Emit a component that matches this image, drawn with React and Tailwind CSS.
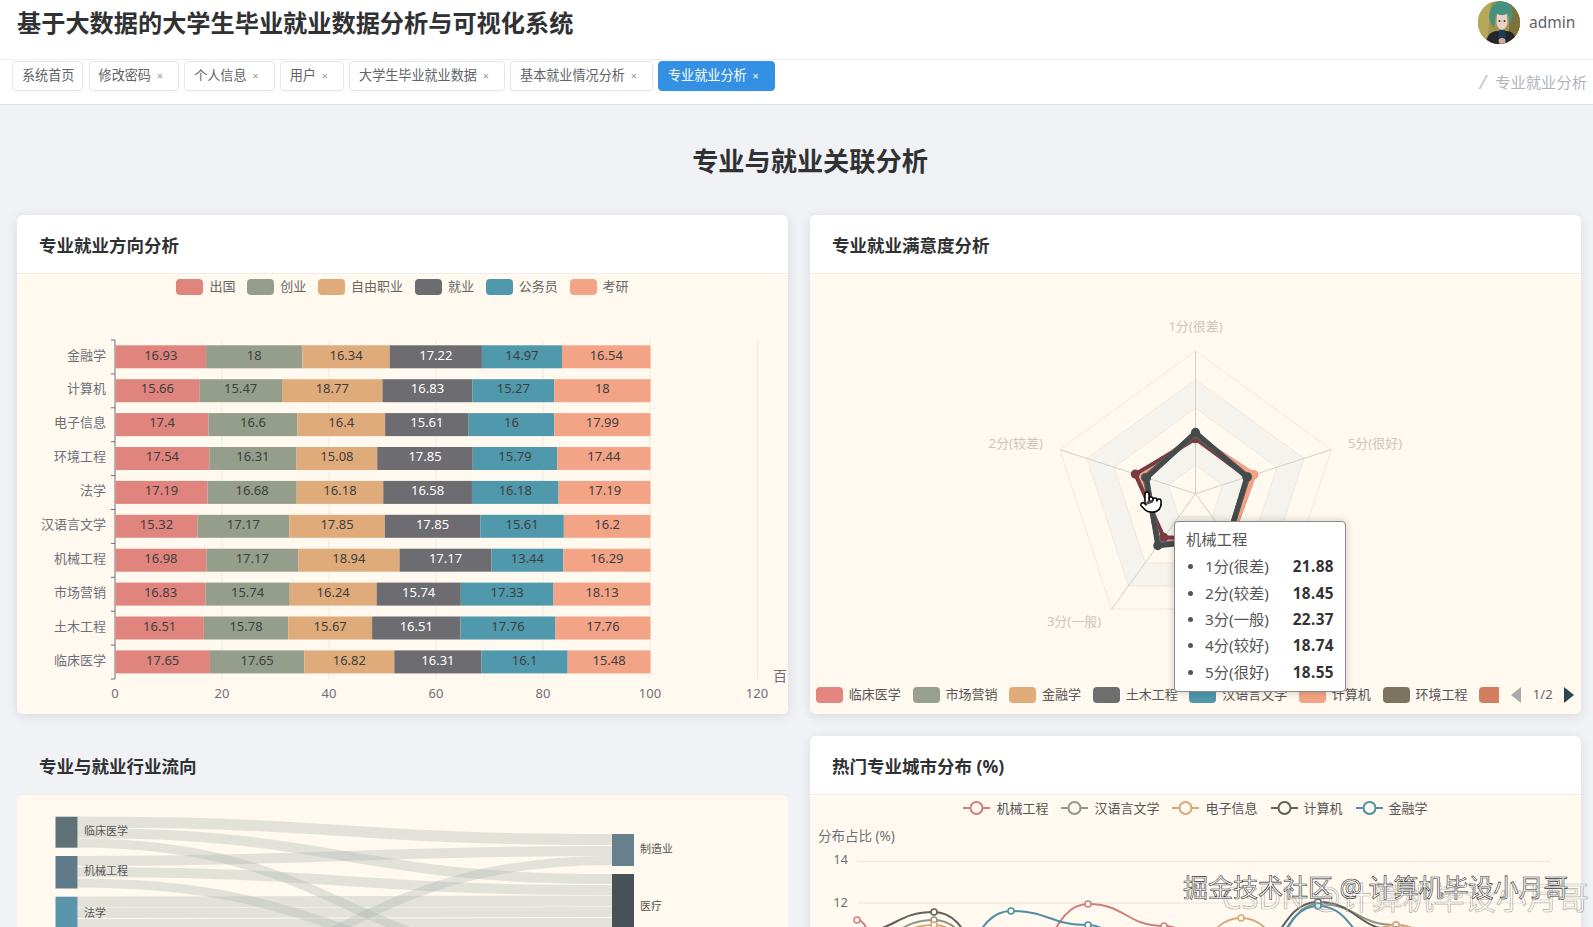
import React from 'react';
import { ChevronDown, Pointer } from 'lucide-react';

const tabs = [
  { name: '系统首页', fixed: true },
  { name: '修改密码' },
  { name: '个人信息' },
  { name: '用户' },
  { name: '大学生毕业就业数据' },
  { name: '基本就业情况分析' },
  { name: '专业就业分析', active: true },
];

const barColors = ['#e0847e', '#949e8b', '#dfab7a', '#6c6c71', '#5098ac', '#f3a386'];
const barLegend = ['出国', '创业', '自由职业', '就业', '公务员', '考研'];
const barRows = [
  ['金融学', [16.93, 18, 16.34, 17.22, 14.97, 16.54]],
  ['计算机', [15.66, 15.47, 18.77, 16.83, 15.27, 18]],
  ['电子信息', [17.4, 16.6, 16.4, 15.61, 16, 17.99]],
  ['环境工程', [17.54, 16.31, 15.08, 17.85, 15.79, 17.44]],
  ['法学', [17.19, 16.68, 16.18, 16.58, 16.18, 17.19]],
  ['汉语言文学', [15.32, 17.17, 17.85, 17.85, 15.61, 16.2]],
  ['机械工程', [16.98, 17.17, 18.94, 17.17, 13.44, 16.29]],
  ['市场营销', [16.83, 15.74, 16.24, 15.74, 17.33, 18.13]],
  ['土木工程', [16.51, 15.78, 15.67, 16.51, 17.76, 17.76]],
  ['临床医学', [17.65, 17.65, 16.82, 16.31, 16.1, 15.48]],
];

const radarLegend = [
  ['临床医学', '#e3867f'],
  ['市场营销', '#98a18f'],
  ['金融学', '#dfab78'],
  ['土木工程', '#6e6e70'],
  ['汉语言文学', '#4f97ab'],
  ['计算机', '#f4a384'],
  ['环境工程', '#7d7460'],
];

const tooltipRows = [
  ['1分(很差)', '21.88'],
  ['2分(较差)', '18.45'],
  ['3分(一般)', '22.37'],
  ['4分(较好)', '18.74'],
  ['5分(很好)', '18.55'],
];

const lineLegend = [
  ['机械工程', '#cf7f7c'],
  ['汉语言文学', '#8f978a'],
  ['电子信息', '#d6a97c'],
  ['计算机', '#615f5c'],
  ['金融学', '#4f8fa3'],
];

// sankey links: from y, to y, width
const links = [
  [822, 839.5, 11],
  [833, 879, 10],
  [843, 965, 9],
  [861, 851, 10],
  [872, 890, 10],
  [883, 975, 9],
  [902, 901, 11],
  [913, 912, 10],
  [924, 923, 10],
  [990, 860.5, 9],
];

const RCX = 1195.5;
const RCY = 493.7;
const RR = 142.7;

function radarPoint(i, f) {
  const a = (-90 - i * 72) * (Math.PI / 180);
  return [RCX + Math.cos(a) * RR * f, RCY + Math.sin(a) * RR * f];
}

function ring(f) {
  return [0, 1, 2, 3, 4].map((i) => radarPoint(i, f).join(',')).join(' ');
}

const radarSeries = [
  ['#e3867f', [0.4, 0.42, 0.4, 0.41, 0.43], 5],
  ['#f4a384', [0.39, 0.43, 0.39, 0.4, 0.427], 5],
  ['#7a3a42', [0.385, 0.444, 0.378, 0.4, 0.38], 4],
  ['#5f6462', [0.42, 0.37, 0.44, 0.39, 0.385], 5.5],
  ['#454b4b', [0.43, 0.36, 0.45, 0.39, 0.378], 5],
];

function curve(points) {
  let d = `M${points[0][0]} ${points[0][1]}`;
  for (let i = 1; i < points.length; i++) {
    const [x0, y0] = points[i - 1];
    const [x1, y1] = points[i];
    const mx = (x0 + x1) / 2;
    d += ` C${mx} ${y0} ${mx} ${y1} ${x1} ${y1}`;
  }
  return d;
}

const lines = [
  ['#cf7f7c', [[857, 920], [880, 945], [1011, 975], [1088, 904], [1164, 926], [1241, 980]]],
  ['#8f978a', [[857, 945], [934, 920], [1011, 980], [1241, 985], [1318, 904], [1396, 925], [1473, 970]]],
  ['#d6a97c', [[857, 950], [934, 925], [1011, 985], [1164, 975], [1241, 918], [1318, 975], [1396, 925], [1473, 965]]],
  ['#615f5c', [[857, 932], [934, 912], [1011, 978], [1164, 980], [1241, 960], [1318, 902], [1396, 930], [1473, 975]]],
  ['#4f8fa3', [[857, 975], [934, 975], [1011, 911], [1088, 925], [1164, 985], [1241, 975], [1318, 906], [1396, 960]]],
];

function Avatar() {
  return (
    <svg viewBox="0 0 42 43" className="w-[42px] h-[43px] rounded-full shrink-0">
      <rect width="42" height="43" fill="#a3954c" />
      <path d="M0 0h13L9 43H0z" fill="#b7a75a" />
      <path d="M31 0h11v43H31z" fill="#7d7238" />
      <path d="M11 16C12 5 17 0 24 0c7 0 11 5 11 15l-3 9-2-11c-4 2-9 2-12 0l-2 14-3-4z" fill="#46907f" />
      <path d="M19 13c3 1.500 7 1.500 10 0l.5 9c-.5 4-3 6.500-5.500 6.500s-5-2.500-5.500-6.500z" fill="#e6d2c6" />
      <circle cx="21.500" cy="20" r="1" fill="#2a3238" />
      <circle cx="26.500" cy="20" r="1" fill="#2a3238" />
      <path d="M8 43c0-8 5-13 11-13h10c6 0 9 5 9 13z" fill="#23272b" />
      <path d="M21 29h6l1 8h-8z" fill="#1c3a5a" />
      <ellipse cx="24" cy="40" rx="3.500" ry="3" fill="#d3a9a2" />
    </svg>
  );
}

function Card({ title, plainHeader, children }) {
  return (
    <section className={`rounded-md overflow-hidden ${plainHeader ? '' : 'bg-white shadow-[0_2px_12px_rgba(0,0,0,0.1)]'}`}>
      <h2 className="h-[59px] px-[22px] pt-[2px] flex items-center text-[17.5px] font-bold text-[#303133] border-b border-[#f0ede6]">{title}</h2>
      <div className="h-[440px] bg-[#fff9ef] flex flex-col overflow-hidden rounded-t-md">{children}</div>
    </section>
  );
}

function BarChart() {
  return (
    <>
      <div className="flex justify-center gap-[11.8px] pt-[5px] h-[21px] shrink-0 text-[13px] leading-[16px] text-[#666]">
        {barLegend.map((name, i) => (
          <div key={name} className="flex items-center gap-[6px]">
            <span className="w-[27px] h-[16px] rounded-[4px]" style={{ background: barColors[i] }} />
            <span className="mb-[2px]">{name}</span>
          </div>
        ))}
      </div>
      <svg viewBox="17 295 771 419" className="w-[771px] h-[419px] shrink-0">
        {[222, 329, 436, 543, 650, 757.6].map((x) => (
          <line key={x} x1={x} x2={x} y1="340" y2="679" stroke="#eeebe2" />
        ))}
        <line x1="115" x2="115" y1="340" y2="679" stroke="#6e7079" />
        {Array.from({ length: 11 }).map((_, i) => (
          <line key={i} x1="111" x2="115" y1={340 + i * 33.9} y2={340 + i * 33.9} stroke="#6e7079" />
        ))}
        {barRows.map(([name, values], r) => {
          const cy = 355 + r * 33.9;
          const total = values.reduce((a, b) => a + b, 0);
          let x = 115.5;
          return (
            <g key={name}>
              <text x="106" y={cy + 4.5} textAnchor="end" fontSize="13" fill="#6e7079">{name}</text>
              {values.map((v, i) => {
                const w = (v / total) * 535;
                const el = (
                  <g key={i}>
                    <rect x={x} y={cy - 9.7} width={w} height="23" fill={barColors[i]} />
                    <text x={x + w / 2} y={cy + 4.5} textAnchor="middle" fontSize="13" fill={i === 3 ? '#ffffff' : '#3f3f3f'}>{v}</text>
                  </g>
                );
                x += w;
                return el;
              })}
            </g>
          );
        })}
        {[0, 20, 40, 60, 80, 100, 120].map((t, i) => (
          <text key={t} x={115 + i * 107} y="698" textAnchor="middle" fontSize="13" fill="#6e7079">{t}</text>
        ))}
        <text x="773" y="681" fontSize="14" fill="#6e7079">百分比</text>
      </svg>
    </>
  );
}

function RadarChart() {
  return (
    <div className="relative flex flex-col h-full">
      <svg viewBox="810 274 771 406" className="w-[771px] h-[406px] shrink-0">
        <path d={`M${ring(0.8).replace(/ /g, ' L')} Z M${ring(0.6).replace(/ /g, ' L')} Z`} fill="#f5f3ee" fillRule="evenodd" />
        <path d={`M${ring(0.4).replace(/ /g, ' L')} Z M${ring(0.2).replace(/ /g, ' L')} Z`} fill="#f5f3ee" fillRule="evenodd" />
        {[0.2, 0.4, 0.6, 0.8, 1].map((f) => (
          <polygon key={f} points={ring(f)} fill="none" stroke="#ece9e0" />
        ))}
        {[0, 1, 2, 3, 4].map((i) => {
          const [x, y] = radarPoint(i, 1);
          return <line key={i} x1={RCX} y1={RCY} x2={x} y2={y} stroke="#d3cfc5" />;
        })}
        {radarSeries.map(([color, vals, sw], s) => {
          const pts = vals.map((f, i) => radarPoint(i, f));
          return (
            <g key={s}>
              <polygon points={pts.map((p) => p.join(',')).join(' ')} fill="none" stroke={color} strokeWidth={sw} strokeLinejoin="round" />
              {pts.map((p, i) => (
                <circle key={i} cx={p[0]} cy={p[1]} r="4.5" fill={color} />
              ))}
            </g>
          );
        })}
        <text x={RCX} y="331" textAnchor="middle" fontSize="13" fill="#cbc7bd">1分(很差)</text>
        <text x="1015.7" y="448" textAnchor="middle" fontSize="13" fill="#cbc7bd">2分(较差)</text>
        <text x="1375" y="448" textAnchor="middle" fontSize="13" fill="#cbc7bd">5分(很好)</text>
        <text x="1074" y="626" textAnchor="middle" fontSize="13" fill="#cbc7bd">3分(一般)</text>
      </svg>
      <div className="mt-[6px] flex items-center gap-[11.8px] pl-[6px] text-[13px] leading-[16px] text-[#555] whitespace-nowrap">
        {radarLegend.map(([name, color]) => (
          <div key={name} className="flex items-center gap-[5.8px]">
            <span className="w-[27px] h-[16px] rounded-[4px]" style={{ background: color }} />
            <span className="mb-[2px]">{name}</span>
          </div>
        ))}
        <span className="w-[20px] h-[16px] rounded-l-[4px] bg-[#d17f5e]" />
        <svg viewBox="0 0 10 16" className="w-[10px] h-[16px] fill-[#aaaaaa]"><path d="M10 0v16L0 8z" /></svg>
        <span className="mb-[2px] text-[#666]">1/2</span>
        <svg viewBox="0 0 10 16" className="w-[10px] h-[16px] fill-[#2f4554]"><path d="M0 0v16l10-8z" /></svg>
      </div>
      <div className="absolute left-[364px] top-[247px] w-[172px] h-[171px] bg-white border-[1.5px] border-[#8a8a86] rounded-[4px] shadow-[0_0_8px_rgba(0,0,0,0.2)] px-[11px] pt-[5px] text-[15.3px] text-[#555]">
        <div className="h-[26.5px] leading-[24px]">机械工程</div>
        {tooltipRows.map(([label, val]) => (
          <div key={label} className="h-[26.4px] flex items-center">
            <span className="w-[5px] h-[5px] rounded-full bg-[#555] ml-[2px] mr-[12px]" />
            <span>{label}</span>
            <span className="ml-auto font-bold text-[#333] tracking-[0.4px]">{val}</span>
          </div>
        ))}
      </div>
      <Pointer size={24} className="absolute left-[329px] top-[216px] fill-white text-black" strokeWidth={1.5} />
    </div>
  );
}

function SankeyChart() {
  return (
    <svg viewBox="17 795 771 440" className="w-[771px] h-[440px] shrink-0">
      {links.map(([a, b, w], i) => (
        <path key={i} d={`M77.5 ${a} C345 ${a} 345 ${b} 612 ${b}`} fill="none" stroke="#a9b2b0" strokeOpacity="0.33" strokeWidth={w} />
      ))}
      <rect x="55.5" y="816.7" width="22" height="31" fill="#5e7278" />
      <rect x="55.5" y="856" width="22" height="32.5" fill="#5f7a88" />
      <rect x="55.5" y="896.7" width="22" height="60" fill="#5b95ab" />
      <rect x="612" y="834" width="22" height="32" fill="#66808c" />
      <rect x="612" y="874" width="22" height="90" fill="#475158" />
      <text x="84" y="835" fontSize="11" fill="#555">临床医学</text>
      <text x="84" y="875" fontSize="11" fill="#555">机械工程</text>
      <text x="84" y="917" fontSize="11" fill="#555">法学</text>
      <text x="640" y="853" fontSize="11" fill="#555">制造业</text>
      <text x="640" y="910" fontSize="11" fill="#555">医疗</text>
    </svg>
  );
}

function LineChart() {
  return (
    <>
      <div className="flex justify-center gap-[13px] pt-[3px] h-[23px] shrink-0 text-[13px] leading-[16px] text-[#555]">
        {lineLegend.map(([name, color]) => (
          <div key={name} className="flex items-center gap-[6px]">
            <svg viewBox="0 0 27 16" className="w-[27px] h-[16px]">
              <line x1="0" x2="27" y1="8" y2="8" stroke={color} strokeWidth="2" />
              <circle cx="13.5" cy="8" r="6" fill="#fff9ef" stroke={color} strokeWidth="2" />
            </svg>
            <span>{name}</span>
          </div>
        ))}
      </div>
      <svg viewBox="810 818 771 417" className="w-[771px] h-[417px] shrink-0">
        <text x="818" y="841" fontSize="13.5" fill="#6e7079">分布占比 (%)</text>
        <text x="848" y="864" textAnchor="end" fontSize="13" fill="#6e7079">14</text>
        <text x="848" y="907" textAnchor="end" fontSize="13" fill="#6e7079">12</text>
        <line x1="857" x2="1550" y1="861.7" y2="861.7" stroke="#e8e6dd" />
        <line x1="857" x2="1550" y1="903" y2="903" stroke="#e8e6dd" />
        {lines.map(([color, pts], i) => (
          <g key={i}>
            <path d={curve(pts)} fill="none" stroke={color} strokeWidth="2" />
            {pts.map((p, j) => (
              <circle key={j} cx={p[0]} cy={p[1]} r="3" fill="#fff9ef" stroke={color} strokeWidth="1.5" />
            ))}
          </g>
        ))}
      </svg>
    </>
  );
}

export default function App() {
  return (
    <div className="relative h-[927px] overflow-hidden bg-[#f0f2f6] font-['Noto_Sans','Noto_Sans_CJK_SC',sans-serif]">
      <header className="h-[60px] bg-white pl-[17px] flex justify-between items-start border-b border-[#eeeeee]">
        <h1 className="text-[24.2px] leading-[46px] font-bold text-[#303133]">基于大数据的大学生毕业就业数据分析与可视化系统</h1>
        <div className="flex items-center h-[45px] shrink-0 w-[115px]">
          <Avatar />
          <span className="ml-[9px] text-[15.5px] text-[#606266]">admin</span>
          <ChevronDown size={12} className="ml-[18px] shrink-0 text-[#606266]" />
        </div>
      </header>
      <div className="h-[45px] bg-white border-b border-[#dcdfe6] flex justify-between items-start pl-[12px] pr-[6px]">
        <div className="flex gap-[5.2px] pt-[1px]">
          {tabs.map((t) => (
            <div
              key={t.name}
              className={`h-[30px] border rounded-[4px] flex items-center pl-[9px] text-[13.1px] shadow-[0_1px_2px_rgba(0,0,0,0.04)] ${
                t.active ? 'bg-[#3490e2] border-[#3490e2] text-white' : 'bg-white border-[#e4e7ed] text-[#606266]'
              } ${t.fixed ? 'pr-[8px]' : 'pr-[14px]'}`}
            >
              <span>{t.name}</span>
              {!t.fixed && <span className={`ml-[5px] w-[8px] text-center text-[11px] ${t.active ? 'text-white' : 'text-[#999]'}`}>×</span>}
            </div>
          ))}
        </div>
        <div className="mt-[11px] flex items-center text-[15.3px] leading-[22px] text-[#b0b4bc]">
          <span className="mr-[9px] text-[19px] italic text-[#c0c4cc]">/</span>
          <span>专业就业分析</span>
        </div>
      </div>
      <main className="pl-[17px] pr-[12px]">
        <h1 className="pt-[41px] pb-[39px] pl-[22px] text-center text-[26.2px] leading-[30px] font-bold text-[#303133]">专业与就业关联分析</h1>
        <div className="grid grid-cols-2 gap-x-[22px] gap-y-[22px]">
          <Card title="专业就业方向分析"><BarChart /></Card>
          <Card title="专业就业满意度分析"><RadarChart /></Card>
          <Card title="专业与就业行业流向" plainHeader><SankeyChart /></Card>
          <Card title="热门专业城市分布 (%)"><LineChart /></Card>
        </div>
      </main>
      <div className="absolute left-[1222px] top-[877px] whitespace-nowrap text-[31px] leading-[40px] text-white/30 [-webkit-text-stroke:0.7px_rgba(110,110,110,0.55)]">CSDN @计算机毕设小月哥</div>
      <div className="absolute left-[1183px] top-[870px] whitespace-nowrap text-[25px] leading-[34px] text-white [-webkit-text-stroke:0.6px_#333]">掘金技术社区 @ 计算机毕设小月哥</div>
    </div>
  );
}
